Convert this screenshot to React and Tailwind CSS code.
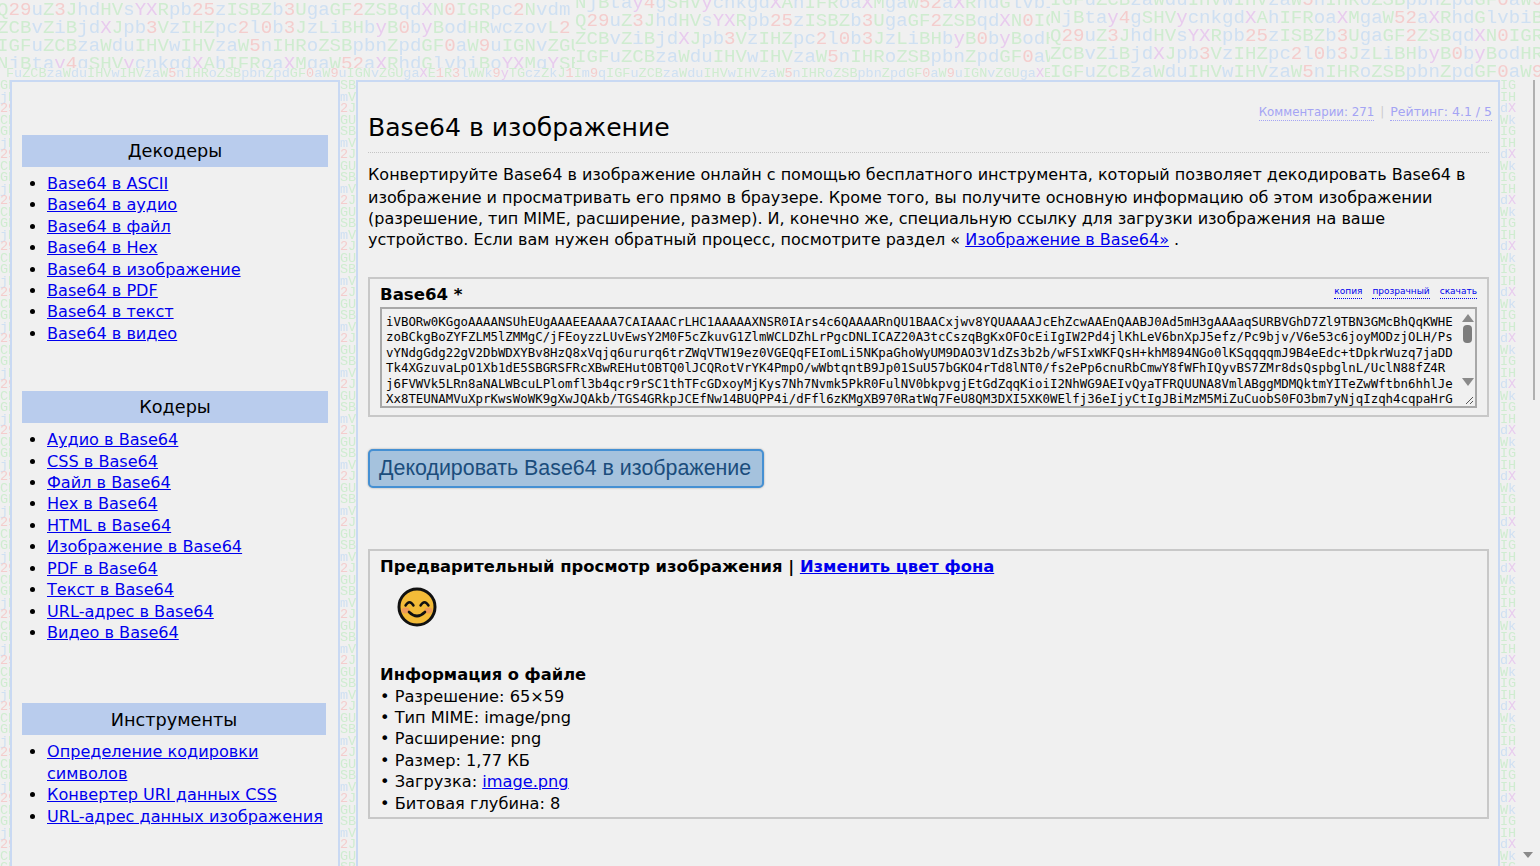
import React from "react";

const ROWS = {
  q: "Q29uZ3JhdHVsYXRpb25zISBZb3UgaGF2ZSBqdXN0IGRpc2Nvdm",
  z: "ZCBvZiBjdXJpb3VzIHZpc2l0b3JzLiBHbyB0byBodHRwczovL2",
  i: "IGFuZCBzaWduIHVwIHVzaW5nIHRoZSBpbnZpdGF0aW9uIGNvZGU",
  n: "NjBtay4gSHVycnkgdXAhIFRoaXMgaW52aXRhdGlvbiBoYXMgYSB",
};
const SMALL =
  "FuZCBzaWduIHVwIHVzaW5nIHRoZSBpbnZpdGF0aW9uIGNvZGUgaXE1R3lWWk9yTGczZkJ1Im9qIGFuZCBzaWduIHVwIHVzaW5nIHRoZSBpbnZpdGF0aW9uIGNvZGUgaXE1R3lWWk9yTGczZkJ1";

function tone(c) {
  if (/[0-9]/.test(c)) return "text-[#f4cdcd]";
  if (/[XYy]/.test(c)) return "text-[#e8cbee]";
  if (/[A-Z]/.test(c)) return "text-[#cfecd0]";
  return "text-[#cfe0f2]";
}

function Coloured({ text }) {
  return text.split("").map((c, i) => (
    <span key={i} className={tone(c)}>
      {c}
    </span>
  ));
}

function Tile({ rows, className }) {
  return (
    <div className={className}>
      {rows.map((r, i) => (
        <div key={i} className="h-[18px] whitespace-pre text-[19.1px] leading-[18px] blur-[0.5px]">
          <Coloured text={r} />
        </div>
      ))}
    </div>
  );
}

function Gutter({ cycle, className }) {
  const rows = [];
  for (let i = 0; i < 70; i++) rows.push(cycle[i % cycle.length]);
  return (
    <div className={"shrink-0 overflow-hidden " + className}>
      {rows.map((r, i) => (
        <div key={i} className="h-[11.5px] whitespace-pre text-[13.5px] leading-[11.5px] blur-[0.5px]">
          <Coloured text={r} />
        </div>
      ))}
    </div>
  );
}

const DECODERS = ["Base64 в ASCII", "Base64 в аудио", "Base64 в файл", "Base64 в Hex", "Base64 в изображение", "Base64 в PDF", "Base64 в текст", "Base64 в видео"];
const ENCODERS = ["Аудио в Base64", "CSS в Base64", "Файл в Base64", "Hex в Base64", "HTML в Base64", "Изображение в Base64", "PDF в Base64", "Текст в Base64", "URL-адрес в Base64", "Видео в Base64"];
const TOOLS = ["Определение кодировки символов", "Конвертер URI данных CSS", "URL-адрес данных изображения"];

const B64 = [
  "iVBORw0KGgoAAAANSUhEUgAAAEEAAAA7CAIAAACrLHC1AAAAAXNSR0IArs4c6QAAAARnQU1BAACxjwv8YQUAAAAJcEhZcwAAEnQAABJ0Ad5mH3gAAAaqSURBVGhD7Zl9TBN3GMcBhQqKWHE",
  "zoBCkgBoZYFZLM5lZMMgC/jFEoyzzLUvEwsY2M0F5cZkuvG1ZlmWCLDZhLrPgcDNLICAZ20A3tcCszqBgKxOFOcEiIgIW2Pd4jlKhLeV6bnXpJ5efz/Pc9bjv/V6e53c6joyMODzjOLH/Ps",
  "vYNdgGdg22gV2DbWDXYBv8HzQ8xVqjq6ururq6trZWqVTW19ez0VGEQqFEIomLi5NKpaGhoWyUM9DAO3V1dZs3b2b/wFSIxWKFQsH+khM894NGo0lKSqqqqmJ9B4eEdc+tDpkrWuzq7jaDD",
  "Tk4XGzuvaLpO1Xb1dE5SBGRSFRcXBwREHutOBTQ0lJCQRotVrYK4PmpO/wWbtqntB9Jp01SuU57bGKO4rTd8lNT0/fs2ePp6cnuRbCmwY8fWFhIQyvBS7ZMr8dsQspbglnL/UclN88fZ4R",
  "j6FVWVk5LRn8aNALWBcuLPlomfl3b4qcr9rSC1thTFcGDxoyMjKys7Nh7Nvmk5PkR0FulNV0bkpvgjEtGdZqqKioiI2NhWG9AEIvQyaTFRQUUNA8VmlABggMDMQktmYITeZwWftbn6hhlJe",
  "Xx8TEUNAMVuXprKwsWoWK9gXwJQAkb/TGS4GRkpJCEfNw14BUQPP4i/dFfl6zKMgXB970RatWq7FeU8QM3DXI5XK0WElfj36eIjyCtIgJBiMzM5MiZuCuobS0FO3bm7yNjqIzqh4cqpaHrG",
];

function NavSection({ title, items, className, bandClass }) {
  return (
    <section className={className}>
      <h2 className={"flex h-[32px] items-center justify-center bg-[#b9cced] pt-[1px] text-[17.7px] font-normal text-black " + bandClass}>{title}</h2>
      <ul className="mt-[6px] list-disc pl-[25px] pr-[2px] text-[16.1px] leading-[21.4px]">
        {items.map((t) => (
          <li key={t}>
            <a href="#" className="text-[#0000ee] underline">
              {t}
            </a>
          </li>
        ))}
      </ul>
    </section>
  );
}

function Smile() {
  return (
    <svg width="40" height="40" viewBox="0 0 40 40" className="ml-[17px] mt-[10px] block">
      <circle cx="20" cy="20" r="18" fill="#f3bb38" stroke="#111" strokeWidth="3" />
      <ellipse cx="8.5" cy="23.5" rx="4" ry="3" fill="#ee9a58" />
      <ellipse cx="31.5" cy="23.5" rx="4" ry="3" fill="#ee9a58" />
      <path d="M8.5 18.5 Q12.5 12 16.5 18.5" fill="none" stroke="#111" strokeWidth="2.4" strokeLinecap="round" />
      <path d="M23.5 18.5 Q27.5 12 31.5 18.5" fill="none" stroke="#111" strokeWidth="2.4" strokeLinecap="round" />
      <path d="M12 25 Q20 33 28 25" fill="none" stroke="#111" strokeWidth="2.6" strokeLinecap="round" />
    </svg>
  );
}

function FauxScrollbar() {
  return (
    <div className="flex w-[16px] shrink-0 flex-col items-center pl-[1px] pt-[5px]">
      <svg width="12" height="8" viewBox="0 0 12 8">
        <path d="M6 0 L12 8 L0 8 Z" fill="#8a8a8a" />
      </svg>
      <div className="mt-[3px] h-[18px] w-[9px] rounded-[4px] bg-[#7d7d7d]" />
      <div className="flex-1" />
      <svg width="12" height="8" viewBox="0 0 12 8" className="mb-[20px]">
        <path d="M0 0 L12 0 L6 8 Z" fill="#8a8a8a" />
      </svg>
    </div>
  );
}

const panel = "shrink-0 border-2 border-b-0 border-[#c9d9f3] bg-[#f0f0f0]";
const small = "border-b border-dotted border-[#0000ee] text-[#0000ee]";

export default function App() {
  return (
    <div className="flex h-screen flex-col overflow-hidden bg-[#f0f0f0] font-['DejaVu_Sans',sans-serif] text-black">
      <header className="flex h-[80px] shrink-0 overflow-hidden font-['Liberation_Mono',monospace]">
        <div className="w-[1050px] shrink-0">
          <div className="flex h-[68px] overflow-hidden">
            <Tile className="-ml-[3px] w-[578px] shrink-0 overflow-hidden pt-[1px]" rows={[ROWS.q, ROWS.z, ROWS.i, ROWS.n]} />
            <Tile className="-mt-[6px] w-[475px] shrink-0 overflow-hidden" rows={[ROWS.n, ROWS.q, ROWS.z, ROWS.i]} />
          </div>
          <div className="h-[12px] overflow-hidden whitespace-pre pl-[6px] text-[13.5px] leading-[11.5px] blur-[0.4px]">
            <Coloured text={SMALL} />
          </div>
        </div>
        <Tile className="-mt-[9px] w-[490px] shrink-0 overflow-hidden" rows={[ROWS.i, ROWS.n, ROWS.q, ROWS.z, ROWS.i]} />
      </header>

      <div className="flex min-h-0 flex-1">
        <Gutter className="w-[10px] font-['Liberation_Mono',monospace]" cycle={["GF", "jB", "29", "CB"]} />

        <aside className={panel + " w-[330px] px-[10px]"}>
          <NavSection title="Декодеры" items={DECODERS} className="mt-[53px]" bandClass="" />
          <NavSection title="Кодеры" items={ENCODERS} className="mt-[47px]" bandClass="" />
          <NavSection title="Инструменты" items={TOOLS} className="mt-[60px]" bandClass="mr-[2px]" />
        </aside>

        <Gutter className="w-[16px] font-['Liberation_Mono',monospace]" cycle={["SB", "mV", "2J", "GU"]} />

        <main className={panel + " w-[1144px] pl-[10px] pr-[9px]"}>
          <div className="flex h-[71px] items-start justify-between border-b border-dotted border-[#c4c4c4]">
            <h1 className="mt-[30px] text-[25.1px] font-normal leading-[32px]">Base64 в изображение</h1>
            <div className="-mr-[3px] mt-[22px] flex leading-[16px] text-[#a4a4f4]">
              <a href="#" className="border-b border-dotted border-[#a4a4f4] text-[11.8px]">Комментарии: 271</a>
              <span className="mx-[6px] text-[12px] text-[#cccccc]">|</span>
              <a href="#" className="border-b border-dotted border-[#a4a4f4] text-[12.5px]">Рейтинг: 4.1 / 5</a>
            </div>
          </div>

          <p className="mt-[10.6px] text-[16px] leading-[21.3px]">
            <span className="mb-[2px] block whitespace-nowrap">Конвертируйте Base64 в изображение онлайн с помощью бесплатного инструмента, который позволяет декодировать Base64 в</span>
            <span className="block whitespace-nowrap">изображение и просматривать его прямо в браузере. Кроме того, вы получите основную информацию об этом изображении</span>
            <span className="block whitespace-nowrap">(разрешение, тип MIME, расширение, размер). И, конечно же, специальную ссылку для загрузки изображения на ваше</span>
            <span className="block whitespace-nowrap">
              устройство. Если вам нужен обратный процесс, посмотрите раздел « <a href="#" className="text-[#0000ee] underline">Изображение в Base64»</a> .
            </span>
          </p>

          <section className="mt-[26px] h-[140px] border-2 border-[#c8c8c8] px-[10px]">
            <div className="flex h-[28px] items-start justify-between">
              <label className="mt-[5px] text-[16.6px] font-bold leading-[21px]">Base64 *</label>
              <div className="mt-[6px] flex gap-[10px] text-[9px] font-normal leading-[13px]">
                <a href="#" className={small}>копия</a>
                <a href="#" className={small}>прозрачный</a>
                <a href="#" className={small}>скачать</a>
              </div>
            </div>
            <div className="relative flex h-[101px] border-2 border-[#a8a8a8] bg-[#f0f0f0]">
              <div className="min-w-0 flex-1 overflow-hidden pl-[4px] pt-[5px] font-['DejaVu_Sans_Mono',monospace] text-[12.4px] leading-[15.5px] text-black">
                {B64.map((l) => (
                  <div key={l} className="whitespace-pre">{l}</div>
                ))}
              </div>
              <FauxScrollbar />
              <svg width="12" height="12" viewBox="0 0 12 12" className="absolute bottom-0 right-0 bg-[#f0f0f0]">
                <path d="M3 10 L10 3 M7 10 L10 7" stroke="#555" strokeWidth="1" />
              </svg>
            </div>
          </section>

          <button className="mt-[32px] flex h-[39px] w-[396px] items-center rounded-[5px] border-2 border-[#4590d3] bg-[#a5c2dd] pl-[9px] font-['Liberation_Sans',sans-serif] text-[21.4px] text-[#1b4d7c] shadow-[0_0_2px_#999]">
            Декодировать Base64 в изображение
          </button>

          <section className="mt-[61px] h-[270px] border-2 border-[#c8c8c8] px-[10px] pt-[5px] text-[16.2px] leading-[21.4px]">
            <h3 className="text-[16.35px] font-bold">
              Предварительный просмотр изображения | <a href="#" className="text-[#0000ee] underline">Изменить цвет фона</a>
            </h3>
            <Smile />
            <h3 className="mt-[37px] text-[16.3px] font-bold">Информация о файле</h3>
            <div>• Разрешение: 65×59</div>
            <div>• Тип MIME: image/png</div>
            <div>• Расширение: png</div>
            <div>• Размер: 1,77 КБ</div>
            <div>
              • Загрузка: <a href="#" className="text-[#0000ee] underline">image.png</a>
            </div>
            <div>• Битовая глубина: 8</div>
          </section>
        </main>

        <Gutter className="w-[23px] font-['Liberation_Mono',monospace]" cycle={["IG", "IH", "dX", "Wk"]} />

        <div className="flex w-[17px] shrink-0 flex-col items-start bg-[#f0f0f0]">
          <div className="ml-[10px] h-[320px] w-[2px] bg-[#b0b0b0]" />
          <div className="flex-1" />
          <svg width="10" height="6" viewBox="0 0 10 6" className="mb-[8px]">
            <path d="M0 0 L10 0 L5 6 Z" fill="#8a8a8a" />
          </svg>
        </div>
      </div>
    </div>
  );
}
